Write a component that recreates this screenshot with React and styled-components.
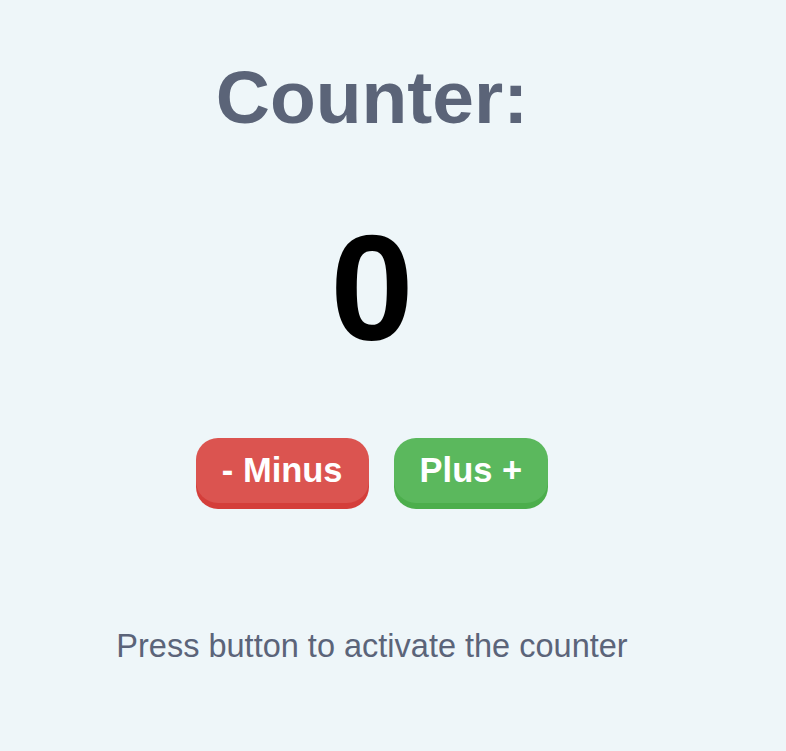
import React, { useState } from 'react';
import styled, { createGlobalStyle } from 'styled-components';

const GlobalStyle = createGlobalStyle`
  html, body {
    margin: 0;
    padding: 0;
    background: #eef6f9;
  }
  body {
    font-family: "Liberation Sans", Arial, sans-serif;
  }
`;

const Page = styled.div`
  width: 744px;
  min-height: 751px;
  display: flex;
  flex-direction: column;
  align-items: center;
  text-align: center;
`;

const Title = styled.h1`
  margin: 54px 0 0 0;
  font-size: 75px;
  line-height: 1.15;
  font-weight: bold;
  color: #5b6478;
`;

const Count = styled.div`
  margin-top: 62px;
  font-size: 150px;
  line-height: normal;
  font-weight: bold;
  color: #000;
`;

const Buttons = styled.div`
  margin-top: 63px;
  display: flex;
  gap: 25px;
`;

const Button = styled.button`
  font-family: "Liberation Sans", Arial, sans-serif;
  font-size: 34.5px;
  font-weight: bold;
  line-height: 1.15;
  color: #fff;
  border: none;
  border-radius: 22px;
  padding: 13px 26px 12px;
  cursor: pointer;
  background: ${p => p.$color};
  box-shadow: 0 6px 0 ${p => p.$shade};
  margin-bottom: 6px;
`;

const Hint = styled.p`
  margin: 119px 0 0 0;
  font-size: 32.5px;
  line-height: 1.15;
  color: #5b6479;
`;

export default function App() {
  const [count, setCount] = useState(0);
  return (
    <>
      <GlobalStyle />
      <Page>
        <Title>Counter:</Title>
        <Count>{count}</Count>
        <Buttons>
          <Button $color="#db5450" $shade="#d43e3a" onClick={() => setCount(count - 1)}>- Minus</Button>
          <Button $color="#5bb85d" $shade="#4cae4c" onClick={() => setCount(count + 1)}>Plus +</Button>
        </Buttons>
        <Hint>Press button to activate the counter</Hint>
      </Page>
    </>
  );
}
